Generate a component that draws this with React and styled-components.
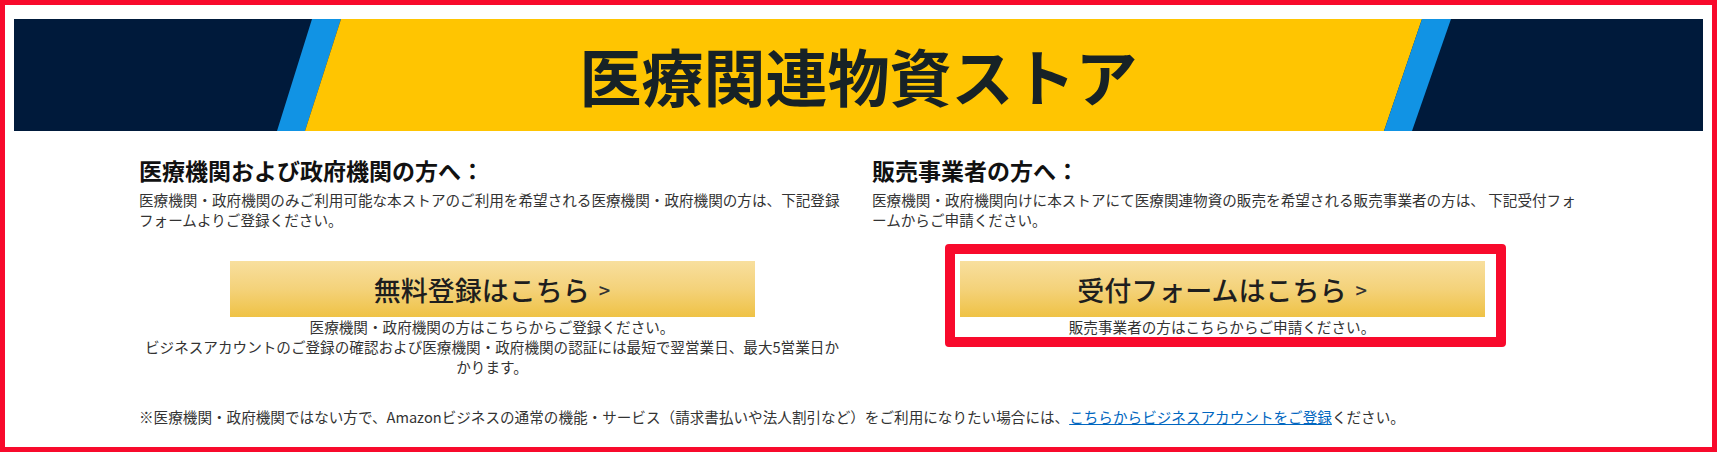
import React from "react";
import styled, { createGlobalStyle } from "styled-components";

const GlobalStyle = createGlobalStyle`
  html, body {
    margin: 0;
    padding: 0;
    background: #fff;
  }
  body {
    font-family: "Noto Sans CJK JP", "Noto Sans", sans-serif;
    color: #333;
  }
`;

const Page = styled.div`
  box-sizing: border-box;
  width: 1717px;
  height: 452px;
  border: 5px solid #f80a2c;
  padding: 14px 9px 20px;
  line-break: normal;
`;

const Banner = styled.header`
  position: relative;
  height: 112px;
  display: flex;
  align-items: center;
  justify-content: center;
  overflow: hidden;
`;

const BannerArt = styled.svg`
  position: absolute;
  inset: 0;
  width: 100%;
  height: 100%;
`;

const Title = styled.h1`
  position: relative;
  margin: 0;
  font-size: 62px;
  line-height: 1;
  font-weight: 700;
  color: #172226;
`;

const Columns = styled.div`
  display: grid;
  grid-template-columns: 706px 706px;
  column-gap: 27px;
  padding-left: 125px;
  margin-top: 23px;
`;

const Column = styled.section`
  display: flex;
  flex-direction: column;
  align-items: flex-start;
`;

const Heading = styled.h2`
  margin: 0 0 4px;
  font-size: 23px;
  line-height: 32px;
  font-weight: 700;
  color: #111;
`;

const Text = styled.p`
  margin: 0;
  font-size: 14.6px;
  line-height: 20px;
  color: #333;
`;

const Action = styled.div`
  box-sizing: border-box;
  display: flex;
  flex-direction: column;
  align-items: center;
  align-self: ${p => (p.$highlight ? "center" : "stretch")};
  margin-top: ${p => (p.$highlight ? "14px" : "31px")};
  border: ${p => (p.$highlight ? "10px solid #f80a2c" : "none")};
  border-radius: 4px;
  padding: ${p => (p.$highlight ? "7px 11px 0 5px" : "0")};
`;

const Button = styled.a`
  display: flex;
  align-items: center;
  justify-content: center;
  width: 525px;
  height: 56px;
  background: linear-gradient(to bottom, #f8df9e 0%, #f4d27a 50%, #efc245 100%);
  color: #1e1e1e;
  font-size: 27px;
  font-weight: 500;
  text-decoration: none;
  cursor: pointer;
`;

const Chevron = styled.span`
  font-size: 20px;
  margin-left: 9px;
  color: #333;
`;

const Note = styled.p`
  margin: 0;
  font-size: 14.6px;
  line-height: 20px;
  text-align: center;
  color: #333;
  align-self: stretch;
`;

const Footnote = styled.p`
  margin: 30px 0 0 125px;
  font-size: 14.6px;
  line-height: 20px;
  color: #333;
`;

const Link = styled.a`
  color: #0066c0;
  text-decoration: underline;
`;

function BannerBackground() {
  return (
    <BannerArt viewBox="0 0 1689 112" preserveAspectRatio="none">
      <rect x="0" y="0" width="1689" height="112" fill="#001a3b" />
      <polygon points="298,0 327,0 291,112 263,112" fill="#1193e4" />
      <polygon points="327,0 1408,0 1370,112 291,112" fill="#ffc501" />
      <polygon points="1408,0 1437,0 1398,112 1370,112" fill="#1193e4" />
    </BannerArt>
  );
}

export default function App() {
  return (
    <>
      <GlobalStyle />
      <Page>
        <Banner>
          <BannerBackground />
          <Title>医療関連物資ストア</Title>
        </Banner>

        <Columns>
          <Column>
            <Heading>医療機関および政府機関の方へ：</Heading>
            <Text>
              医療機関・政府機関のみご利用可能な本ストアのご利用を希望される医療機関・政府機関の方は、下記登録フォームよりご登録ください。
            </Text>
            <Action>
              <Button>
                無料登録はこちら<Chevron>&gt;</Chevron>
              </Button>
              <Note>
                医療機関・政府機関の方はこちらからご登録ください。
                <br />
                ビジネスアカウントのご登録の確認および医療機関・政府機関の認証には最短で翌営業日、最大5営業日かかります。
              </Note>
            </Action>
          </Column>

          <Column>
            <Heading>販売事業者の方へ：</Heading>
            <Text>
              医療機関・政府機関向けに本ストアにて医療関連物資の販売を希望される販売事業者の方は、 下記受付フォームからご申請ください。
            </Text>
            <Action $highlight>
              <Button>
                受付フォームはこちら<Chevron>&gt;</Chevron>
              </Button>
              <Note>販売事業者の方はこちらからご申請ください。</Note>
            </Action>
          </Column>
        </Columns>

        <Footnote>
          ※医療機関・政府機関ではない方で、Amazonビジネスの通常の機能・サービス（請求書払いや法人割引など）をご利用になりたい場合には、
          <Link>こちらからビジネスアカウントをご登録</Link>ください。
        </Footnote>
      </Page>
    </>
  );
}
